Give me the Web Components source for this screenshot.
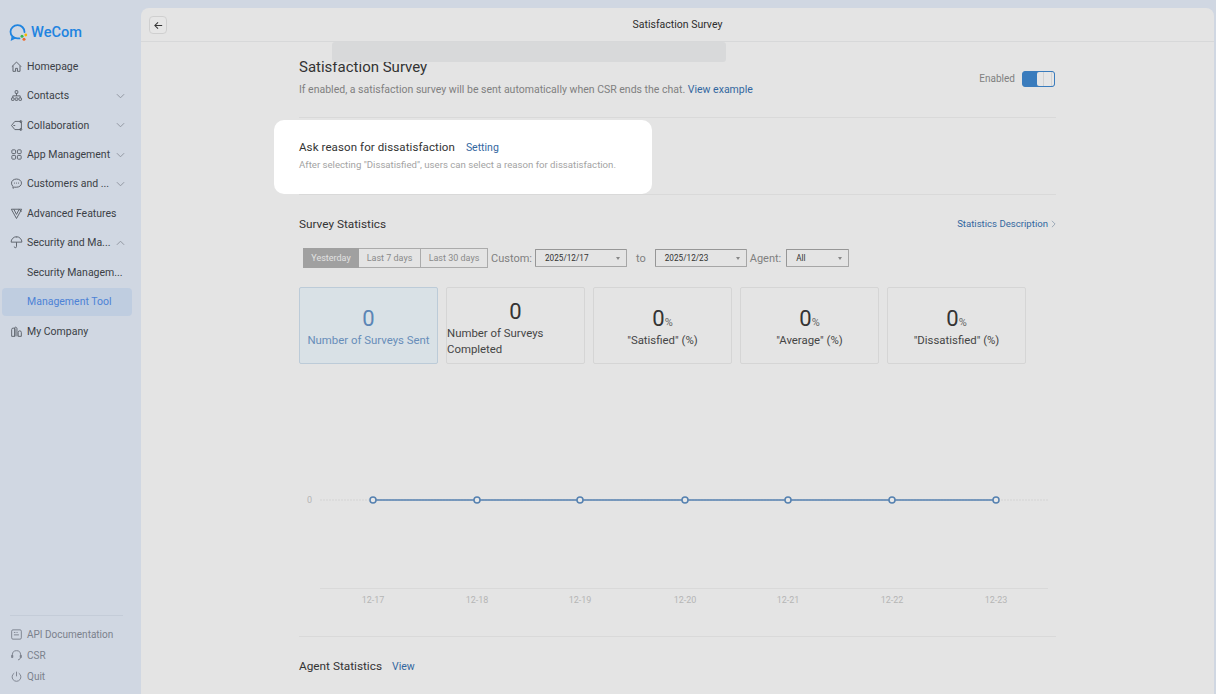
<!DOCTYPE html>
<html lang="en">
<head>
<meta charset="utf-8">
<title>Satisfaction Survey</title>
<style>
  html, body { margin: 0; height: 100%; overflow: hidden; background: #d0d7e2; }
  body { font-family: Roboto, "Noto Sans", sans-serif; color: #333; }
  app-shell { height: 694px; }
</style>
</head>
<body>
<app-shell>
  <side-nav slot="side"></side-nav>
  <page-panel slot="main" heading="Satisfaction Survey">
    <survey-head></survey-head>
    <reason-card></reason-card>
    <survey-stats></survey-stats>
    <agent-row></agent-row>
  </page-panel>
</app-shell>

<script>
const ICONS = {
  home: '<path d="M2 7.200 7 2.200l5 5M3.200 6.200v6h2.800V9h2v3.200h2.800v-6"/>',
  org: '<rect x="5.600" y="1.800" width="2.800" height="3" rx=".5"/><path d="M7 4.800v2.600M3 9.600v-2.200h8v2.200"/><rect x="1.600" y="9.600" width="2.800" height="2.600" rx=".5"/><rect x="5.600" y="9.600" width="2.800" height="2.600" rx=".5"/><rect x="9.600" y="9.600" width="2.800" height="2.600" rx=".5"/>',
  collab: '<path d="M5.200 2.600h5.600a1.500 1.500 0 0 1 1.500 1.500v5.800a1.500 1.500 0 0 1-1.500 1.500H5.200L1.600 7z"/><path d="M3.600 7h2"/><circle cx="11.600" cy="2.800" r="1.100"/><circle cx="11.600" cy="11.200" r="1.100"/>',
  apps: '<rect x="2" y="2" width="4" height="4" rx=".8"/><rect x="8" y="2" width="4" height="4" rx=".8"/><rect x="2" y="8" width="4" height="4" rx=".8"/><rect x="8" y="8" width="4" height="4" rx=".8"/>',
  chat: '<path d="M7 2.200c3 0 5.400 1.900 5.400 4.400S10 11 7 11H4.800l-1.600 1.200V10C2.200 9.200 1.600 8 1.600 6.600 1.600 4.100 4 2.200 7 2.200z"/><path d="M4.800 6.400h.01M7 6.400h.01M9.200 6.400h.01" stroke-width="1.200" stroke-linecap="round"/>',
  vee: '<path d="M1.400 2.400h11.200L7 12.400zM4.200 2.600 7 8l2.800-5.400M9.600 2.400l3 2.400"/>',
  umbrella: '<path d="M1.200 6.600a5.800 5.800 0 0 1 11.600 0zM7 .8v.8M7 6.600v4.800a1.200 1.200 0 0 1-2.400 0"/>',
  company: '<path d="M1.800 12.200V5a1.700 1.700 0 0 1 3.400 0v7.200zM5.200 12.200V2.600a1.500 1.500 0 0 1 2.300 1.300v8.300M8.800 12.200V8a1.700 1.700 0 0 1 3.400 0v4.200z"/>',
  doc: '<rect x="1.800" y="2" width="10.400" height="10" rx="1.400"/><path d="M4.200 4.800h1.600M7 4.800h1.200M4.200 7.400h5.400"/>',
  headset: '<path d="M2.600 8V6.200a4.400 4.400 0 0 1 8.800 0V8M11.400 9A3.200 3.200 0 0 1 8.600 11.800"/><path d="M1.800 6.800h1.200v2.400H1.800zM11 6.800h1.200v2.400H11z" fill="currentColor"/>',
  power: '<path d="M4.600 3.400a4.700 4.700 0 1 0 4.800 0M7 1.800v5"/>'
};

function svgIcon(name) {
  return `<svg viewBox="0 0 14 14" width="13" height="13" fill="none" stroke="currentColor" stroke-width="1" stroke-linejoin="round">${ICONS[name] || ""}</svg>`;
}

class AppShell extends HTMLElement {
  constructor() {
    super();
    this.attachShadow({ mode: "open" }).innerHTML = `<style>
      :host { display: grid; grid-template-columns: 141px 1fr; }
    </style><slot name="side"></slot><slot name="main"></slot>`;
  }
}

class NavItem extends HTMLElement {
  connectedCallback() {
    const icon = this.getAttribute("icon");
    const arrow = this.getAttribute("arrow");
    const chev = arrow ? `<svg class="chev" viewBox="0 0 10 6" width="9" height="6" fill="none" stroke="currentColor" stroke-width="1"><path d="${arrow === "up" ? "M1 5 5 1l4 4" : "M1 1l4 4 4-4"}"/></svg>` : "";
    this.attachShadow({ mode: "open" }).innerHTML = `<style>
      :host { display: flex; align-items: center; height: 29.450px; padding-left: 10px; padding-right: 16px; box-sizing: border-box; position: relative; font-size: 10.500px; color: #3b3f46; white-space: nowrap; }
      :host([active]) { color: #4d82d6; }
      :host([active])::before { content: ""; position: absolute; left: 2px; right: 9px; top: .500px; bottom: .500px; background: #bfcde0; border-radius: 4px; }
      .ic { width: 17px; flex: none; display: flex; color: #5a5f68; }
      .label { position: relative; flex: 1; min-width: 0; overflow: hidden; text-overflow: ellipsis; }
      .chev { flex: none; color: #8b919b; margin-left: 3px; }
      :host([sub]) { padding-right: 16px; }
      :host([sub]) .ic { visibility: hidden; }
    </style><span class="ic">${icon ? svgIcon(icon) : ""}</span><span class="label"><slot></slot></span>${chev}`;
  }
}

class FootItem extends HTMLElement {
  connectedCallback() {
    this.attachShadow({ mode: "open" }).innerHTML = `<style>
      :host { display: flex; align-items: center; height: 21px; font-size: 10px; color: #7b818c; white-space: nowrap; }
      span { width: 17px; display: flex; }
    </style><span>${svgIcon(this.getAttribute("icon"))}</span><slot></slot>`;
  }
}

class SideNav extends HTMLElement {
  constructor() {
    super();
    this.attachShadow({ mode: "open" }).innerHTML = `<style>
      :host { display: flex; flex-direction: column; height: 694px; box-sizing: border-box; }
      .logo { height: 51.500px; display: flex; align-items: flex-end; padding: 0 0 10px 9px; box-sizing: border-box; gap: 3px; font-size: 14.600px; font-weight: 500; color: #1f84e0; }
      .logo span, .logo svg { margin-bottom: 1px; }
      .foot { margin-top: auto; margin-left: 10px; margin-right: 18px; border-top: 1px solid #c4ccd8; padding: 8px 0 7px; }
    </style>
    <div class="logo"><svg viewBox="0 0 19 17" width="19" height="17" fill="none"><path d="M15.500 8A7 6.600 0 1 0 8.500 14.400h2" stroke="#1f84e0" stroke-width="1.800" stroke-linecap="round"/><path d="M3.500 12 2.700 15.600l3.600-1.800" stroke="#1f84e0" stroke-width="1.500"/><circle cx="13" cy="12.200" r="1.500" fill="#3bb54a"/><circle cx="16.800" cy="11" r="1.400" fill="#f5b800"/><circle cx="15" cy="15.300" r="1.500" fill="#ef6a2c"/></svg><span>WeCom</span></div>
    <nav-item icon="home">Homepage</nav-item>
    <nav-item icon="org" arrow="down">Contacts</nav-item>
    <nav-item icon="collab" arrow="down">Collaboration</nav-item>
    <nav-item icon="apps" arrow="down">App Management</nav-item>
    <nav-item icon="chat" arrow="down">Customers and ...</nav-item>
    <nav-item icon="vee">Advanced Features</nav-item>
    <nav-item icon="umbrella" arrow="up">Security and Ma...</nav-item>
    <nav-item sub>Security Managem...</nav-item>
    <nav-item sub active>Management Tool</nav-item>
    <nav-item icon="company">My Company</nav-item>
    <div class="foot">
      <foot-item icon="doc">API Documentation</foot-item>
      <foot-item icon="headset">CSR</foot-item>
      <foot-item icon="power">Quit</foot-item>
    </div>`;
  }
}

class PagePanel extends HTMLElement {
  connectedCallback() {
    this.attachShadow({ mode: "open" }).innerHTML = `<style>
      :host { display: flex; flex-direction: column; height: 686px; margin: 8px 2px 0 0; background: #e4e4e4; border-radius: 8px 8px 0 0; overflow: hidden; position: relative; }
      header { height: 33px; flex: none; display: flex; align-items: center; justify-content: center; position: relative; border-bottom: 1px solid #d7d8d9; font-size: 10.500px; color: #2c2c2c; }
      .back { position: absolute; left: 8px; top: 8px; width: 18px; height: 18px; box-sizing: border-box; border: 1px solid #cfcfcf; border-radius: 4px; display: flex; align-items: center; justify-content: center; background: #e6e6e6; }
      .body { padding: 0 158px; width: 757px; box-sizing: content-box; }
      .mask { position: absolute; left: 191px; top: 34px; width: 394px; height: 20px; background: #d8d9da; border-radius: 3px; }
    </style>
    <header>
      <span class="back"><svg viewBox="0 0 12 12" width="11" height="11" fill="none" stroke="#333" stroke-width="1.100"><path d="M10 6H2M5.500 2.500 2 6l3.500 3.500"/></svg></span>
      ${this.getAttribute("heading")}
    </header>
    <div class="body"><slot></slot></div>
    <div class="mask"></div>`;
  }
}

class SurveyHead extends HTMLElement {
  constructor() {
    super();
    this.attachShadow({ mode: "open" }).innerHTML = `<style>
      :host { display: flex; height: 76px; box-sizing: border-box; border-bottom: 1px solid #d9d9d9; justify-content: space-between; padding-top: 15px; }
      h1 { margin: 0; font-size: 15px; line-height: 21px; font-weight: 400; color: #333; }
      p { margin: 4px 0 0; font-size: 10.500px; line-height: 15px; color: #808080; }
      a { color: #33679f; }
      .state { display: flex; gap: 7px; align-items: center; height: 17px; margin: 13px 1px 0 0; font-size: 10px; color: #808080; }
      .toggle { width: 33px; height: 16px; box-sizing: border-box; border: 1px solid #3a7cbd; border-radius: 3px; background: #3a7cbd; display: flex; justify-content: flex-end; }
      .toggle i { width: 17px; background: #e6e6e6; border-radius: 2px; background-image: repeating-linear-gradient(90deg, transparent 0 6px, #d2d2d2 6px 7px, transparent 7px 8px); }
    </style>
    <div><h1>Satisfaction Survey</h1><p>If enabled, a satisfaction survey will be sent automatically when CSR ends the chat. <a>View example</a></p></div>
    <div class="state">Enabled <span class="toggle"><i></i></span></div>`;
  }
}

class ReasonCard extends HTMLElement {
  constructor() {
    super();
    this.attachShadow({ mode: "open" }).innerHTML = `<style>
      :host { display: block; width: 378px; height: 74px; box-sizing: border-box; margin: 2px 0 0 -25px; padding: 18px 25px 0; background: #fff; border-radius: 10px; }
      .t { font-size: 11.500px; line-height: 18px; color: #333; letter-spacing: .100px; }
      a { font-size: 10.500px; color: #33679f; margin-left: 8px; letter-spacing: 0; }
      p { margin: 0; font-size: 9.650px; line-height: 16px; color: #a3a3a3; white-space: nowrap; }
    </style>
    <div class="t">Ask reason for dissatisfaction <a>Setting</a></div>
    <p>After selecting "Dissatisfied", users can select a reason for dissatisfaction.</p>`;
  }
}

class RangeTabs extends HTMLElement {
  constructor() {
    super();
    this.attachShadow({ mode: "open" }).innerHTML = `<style>
      :host { display: flex; height: 20px; font-size: 9px; color: #8a8a8a; }
      span { box-sizing: border-box; display: flex; align-items: center; justify-content: center; border: 1px solid #ababab; border-left: 0; height: 20px; }
      .on { width: 56px; background: #a0a0a0; border: 1px solid #a0a0a0; color: #e2e2e2; }
      .w1 { width: 62px; }
      .w2 { width: 67px; }
    </style><span class="on">Yesterday</span><span class="w1">Last 7 days</span><span class="w2">Last 30 days</span>`;
  }
}

class SelectBox extends HTMLElement {
  connectedCallback() {
    this.attachShadow({ mode: "open" }).innerHTML = `<style>
      :host { display: flex; align-items: center; justify-content: space-between; box-sizing: border-box; height: 18px; padding: 0 6px 0 9px; border: 1px solid #a6a6a6; border-top-color: #969696; border-left-color: #969696; border-radius: 1px; font-size: 8.200px; color: #333; width: ${this.getAttribute("width")}px; }
      i { width: 0; height: 0; border-left: 2px solid transparent; border-right: 2px solid transparent; border-top: 3px solid #888; }
    </style><slot></slot><i></i>`;
  }
}

class StatCard extends HTMLElement {
  connectedCallback() {
    const unit = this.hasAttribute("percent") ? "<small>%</small>" : "";
    this.attachShadow({ mode: "open" }).innerHTML = `<style>
      :host { display: flex; flex-direction: column; align-items: center; justify-content: center; box-sizing: border-box; width: 139px; height: 77px; padding-top: 1px; border: 1px solid #d5d5d5; border-radius: 2px; color: #333; font-size: 11.400px; line-height: 16px; text-align: center; }
      :host([active]) { background: #d9e1e6; border-color: #bccbd8; color: #5b85b5; }
      :host([wrap]) { align-items: flex-start; text-align: left; padding-top: 2px; }
      .n { font-size: 22px; line-height: 29px; margin-bottom: -1px; }
      :host([wrap]) .n { align-self: center; }
      small { font-size: 11px; line-height: 0; color: #666; }
      .l { color: inherit; opacity: .9; }
    </style><div class="n">0${unit}</div><div class="l"><slot></slot></div>`;
  }
}

class TrendChart extends HTMLElement {
  constructor() {
    super();
    const xs = [373, 477, 580, 685, 788, 892, 996].map(x => x - 299);
    const days = ["12-17", "12-18", "12-19", "12-20", "12-21", "12-22", "12-23"];
    const dots = xs.map(x => `<circle cx="${x}" cy="136" r="3" fill="#e8e8e8" stroke="#5581b0" stroke-width="1.500"/>`).join("");
    const labels = days.map((d, i) => `<text x="${xs[i]}" y="239" text-anchor="middle">${d}</text>`).join("");
    this.attachShadow({ mode: "open" }).innerHTML = `<style>
      :host { display: block; height: 272px; border-bottom: 1px solid #d9d9d9; }
      svg { display: block; font-family: Roboto, sans-serif; font-size: 9px; fill: #b5b5b5; }
    </style>
    <svg viewBox="0 0 757 272" width="757" height="272">
      <text x="8" y="139">0</text>
      <line x1="21" x2="749" y1="136" y2="136" stroke="#d4d4d4" stroke-width="1" stroke-dasharray="2 1"/>
      <line x1="${xs[0]}" x2="${xs[6]}" y1="136" y2="136" stroke="#5581b0" stroke-width="1.500"/>
      ${dots}
      <line x1="21" x2="749" y1="224.500" y2="224.500" stroke="#d9d9d9"/>
      ${labels}
    </svg>`;
  }
}

class SurveyStats extends HTMLElement {
  constructor() {
    super();
    this.attachShadow({ mode: "open" }).innerHTML = `<style>
      :host { display: block; border-top: 1px solid #d9d9d9; }
      .top { display: flex; justify-content: space-between; align-items: center; height: 19px; margin-top: 19px; font-size: 11.800px; color: #333; }
      .top a { display: flex; align-items: center; gap: 3px; font-size: 9.600px; color: #33679f; }
      .filters { display: flex; align-items: center; margin: 15px 0 0 4px; height: 20px; font-size: 11px; color: #808080; }
      .cards { display: flex; gap: 8px; margin-top: 19px; }
      .c { margin: 0 3px 0 3px; }
      .to { margin: 0 9px 0 9px; }
      .a { margin: 0 5px 0 3px; }
    </style>
    <div class="top"><span>Survey Statistics</span><a>Statistics Description <svg viewBox="0 0 6 10" width="5" height="8" fill="none" stroke="#8a9aac"><path d="M1 1l4 4-4 4"/></svg></a></div>
    <div class="filters">
      <range-tabs></range-tabs><span class="c">Custom:</span>
      <select-box width="92">2025/12/17</select-box><span class="to">to</span>
      <select-box width="92">2025/12/23</select-box><span class="a">Agent:</span>
      <select-box width="63">All</select-box>
    </div>
    <div class="cards">
      <stat-card active>Number of Surveys Sent</stat-card>
      <stat-card wrap>Number of Surveys Completed</stat-card>
      <stat-card percent>"Satisfied" (%)</stat-card>
      <stat-card percent>"Average" (%)</stat-card>
      <stat-card percent>"Dissatisfied" (%)</stat-card>
    </div>
    <trend-chart></trend-chart>`;
  }
}

class AgentRow extends HTMLElement {
  constructor() {
    super();
    this.attachShadow({ mode: "open" }).innerHTML = `<style>
      :host { display: flex; align-items: center; gap: 10px; height: 20px; margin-top: 19px; font-size: 11.800px; color: #333; }
      a { font-size: 10.500px; color: #33679f; }
    </style>Agent Statistics <a>View</a>`;
  }
}

customElements.define("app-shell", AppShell);
customElements.define("nav-item", NavItem);
customElements.define("foot-item", FootItem);
customElements.define("side-nav", SideNav);
customElements.define("page-panel", PagePanel);
customElements.define("survey-head", SurveyHead);
customElements.define("reason-card", ReasonCard);
customElements.define("range-tabs", RangeTabs);
customElements.define("select-box", SelectBox);
customElements.define("stat-card", StatCard);
customElements.define("trend-chart", TrendChart);
customElements.define("survey-stats", SurveyStats);
customElements.define("agent-row", AgentRow);
</script>
</body>
</html>
